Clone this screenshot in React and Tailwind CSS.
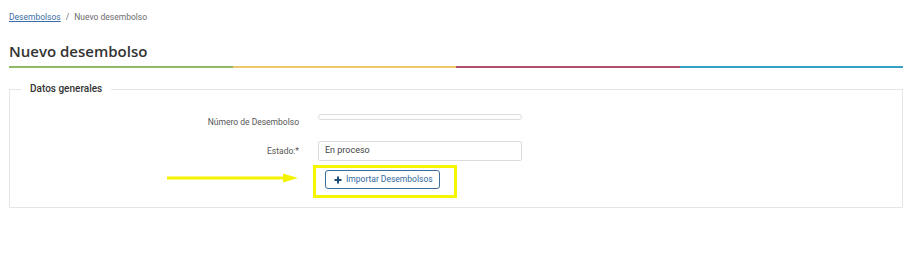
import React from 'react';

const stripe = ['bg-[#8fba68]', 'bg-[#ecca6c]', 'bg-[#b14f6a]', 'bg-[#35a0c6]'];

export default function App() {
  return (
    <div className="w-[915px] h-[279px] bg-white pl-[9px] pr-[12px] pt-[10px] font-['Roboto',sans-serif] relative overflow-hidden">
      {/* Breadcrumb */}
      <p className="text-[8.5px] leading-[14px] text-[#6b6b6b]">
        <a href="#" className="text-[#3b6ea8] underline">Desembolsos</a>
        <span className="mx-[5px]">/</span>
        <span>Nuevo desembolso</span>
      </p>

      {/* Title */}
      <h1 className="mt-[16px] font-['Open_Sans',sans-serif] font-semibold text-[15px] leading-[22px] text-[#333]">
        Nuevo desembolso
      </h1>

      <div className="mt-[4px] flex h-[2px]">
        {stripe.map((c, i) => <div key={i} className={`flex-1 ${c}`} />)}
      </div>

      {/* Datos generales */}
      <fieldset className="mt-[14px] border border-[#e6e6e6] pl-[11px] pr-[10px] h-[126px]">
        <legend className="px-[9px] text-[10px] font-medium text-[#333] leading-[14px]">Datos generales</legend>

        <div className="mt-[18px] grid grid-cols-[278px_204px] gap-x-[19px] items-start">
          <label className="mt-[1px] text-right text-[8.5px] text-[#555] leading-[14px]">Número de Desembolso</label>
          <div className="h-[6px] border border-[#dcdcdc] rounded-[3px]" />
        </div>

        <div className="mt-[12px] grid grid-cols-[278px_204px] gap-x-[19px] items-center">
          <label className="text-right text-[8.5px] text-[#555] leading-[14px]">Estado:*</label>
          <div className="h-[20px] border border-[#dcdcdc] rounded-[2px] px-[6px] flex items-center text-[9px] text-[#444]">En proceso</div>
        </div>

        <div className="mt-[9px] pl-[304px]">
          <button className="h-[19px] w-[115px] border border-[#3d6d99] rounded-[3px] flex items-center pl-[8px] gap-[4px] text-[8.5px] text-[#2f68a0]">
            <svg width="8" height="8" viewBox="0 0 8 8">
              <path d="M4 0.5v7M0.5 4h7" stroke="#1c4b78" strokeWidth="2" />
            </svg>
            Importar Desembolsos
          </button>
        </div>
      </fieldset>

      {/* Annotation overlay */}
      <div className="absolute left-[313px] top-[165px] w-[144px] h-[33px] border-[3px] border-[#f6f600]" />
      <svg className="absolute left-[167px] top-[173px]" width="134" height="10" viewBox="0 0 134 10">
        <path d="M0 5h118" stroke="#f3f300" strokeWidth="3" />
        <path d="M116 0.5L131 5L116 9.5Z" fill="#f3f300" />
      </svg>
    </div>
  );
}
